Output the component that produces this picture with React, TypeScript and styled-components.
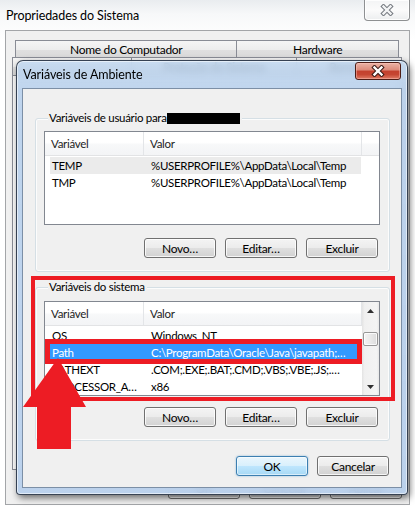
import React from "react";
import styled, { createGlobalStyle, css } from "styled-components";

const GlobalStyle = createGlobalStyle`
  html, body { margin: 0; padding: 0; }
  body {
    background: #ffffff;
    font-family: Lato, "Open Sans", "Noto Sans", sans-serif;
    font-size: 11.5px;
    letter-spacing: -0.3px;
    color: #000;
  }
  * { box-sizing: border-box; }
`;

const Desktop = styled.div`
  position: relative;
  width: 415px;
  height: 514px;
  overflow: hidden;
  background: #fff;
`;

/* ---------- outer window ---------- */
const OuterWindow = styled.div`
  display: flex;
  flex-direction: column;
  width: 415px;
  height: 514px;
  padding: 0 5px 9px;
  background: linear-gradient(180deg, #e9ecef 0px, #f7f8f9 14px, #ffffff 40px, #ffffff 100%);
`;

const OuterTitleBar = styled.div`
  height: 30px;
  display: flex;
  justify-content: space-between;
  align-items: flex-start;
`;

const WindowTitle = styled.span<{ $top: number; $left: number }>`
  margin: ${(p) => p.$top}px 0 0 ${(p) => p.$left}px;
  line-height: 16px;
  font-size: 12.5px;
  letter-spacing: -0.1px;
  color: #000;
  white-space: nowrap;
`;

const CloseButton = styled.div<{ $red?: boolean }>`
  width: 46px;
  display: flex;
  align-items: center;
  justify-content: center;
  ${(p) =>
    p.$red
      ? css`
          height: 18px;
          margin: 1px 1px 0 0;
          border: 1px solid #4d1d16;
          border-radius: 3px;
          background: linear-gradient(180deg, #eab3a6 0%, #dd8c7c 42%, #c4412e 52%, #c64632 72%, #df7c66 100%);
          box-shadow: inset 0 0 0 1px rgba(255, 200, 190, 0.45);
        `
      : css`
          height: 21px;
          border: 1px solid #8e9092;
          border-top: none;
          border-radius: 0 0 4px 4px;
          background: linear-gradient(180deg, #f3f4f5 0%, #fbfbfb 50%, #eceeef 100%);
          box-shadow: inset 0 0 0 1px rgba(255, 255, 255, 0.9);
        `}
`;

const OuterPanel = styled.div`
  flex: 1;
  display: flex;
  flex-direction: column;
  border: 1px solid #a3a5a8;
  background: #f0f0f0;
  padding: 9px 6px 5px;
`;

const TabRow = styled.div<{ $back?: boolean }>`
  display: flex;
  height: 18px;
  ${(p) =>
    p.$back
      ? css`
          margin: 0 4px 0 3px;
        `
      : css`
          margin-top: -1px;
        `}
`;

const Tab = styled.div<{ $width: number }>`
  width: ${(p) => p.$width}px;
  height: 18px;
  margin-left: -1px;
  display: flex;
  align-items: center;
  justify-content: center;
  border: 1px solid #898c95;
  border-bottom: none;
  background: linear-gradient(180deg, #f5f5f5 0%, #ededed 50%, #e0e0e0 51%, #d9d9d9 100%);
  font-size: 12px;
  white-space: nowrap;
  &:first-child {
    margin-left: 0;
  }
`;

const TabPage = styled.div`
  flex: 1;
  border: 1px solid #898c95;
  background: #fbfbfb;
`;

const ButtonRow = styled.div<{ $top: number; $right: number }>`
  display: flex;
  justify-content: flex-end;
  gap: 9px;
  margin-top: ${(p) => p.$top}px;
  margin-right: ${(p) => p.$right}px;
  flex-shrink: 0;
`;

const Button = styled.div<{ $primary?: boolean; $tall?: boolean }>`
  width: 72px;
  height: ${(p) => (p.$tall ? 21 : 20)}px;
  display: flex;
  align-items: center;
  justify-content: center;
  font-size: 12px;
  color: #000;
  border: 1px solid #707070;
  border-radius: 3px;
  background: linear-gradient(180deg, #f4f4f4 0%, #ececec 48%, #dfdfdf 52%, #d2d2d2 100%);
  box-shadow: inset 0 0 0 1px rgba(255, 255, 255, 0.8);
  ${(p) =>
    p.$primary &&
    css`
      border-color: #3c7fb1;
      background: linear-gradient(180deg, #eaf6fd 0%, #d9f0fc 48%, #bee6fd 52%, #a7d9f5 100%);
      box-shadow: inset 0 0 0 1px rgba(255, 255, 255, 0.55), 0 0 2px rgba(60, 140, 200, 0.6);
    `}
`;

/* ---------- dialog ---------- */
const Dialog = styled.div`
  position: absolute;
  left: 16px;
  top: 60px;
  width: 392px;
  height: 435px;
  display: flex;
  flex-direction: column;
  padding: 0 5px 6px;
  border: 1px solid rgba(30, 40, 55, 0.85);
  border-radius: 7px 7px 4px 4px;
  background: linear-gradient(180deg, rgba(192, 215, 240, 0.84) 0%, rgba(180, 205, 234, 0.86) 30px, rgba(183, 207, 236, 0.92) 100%);
  backdrop-filter: blur(3.5px);
  box-shadow: inset 0 0 0 1px rgba(255, 255, 255, 0.55), 2px 3px 7px rgba(0, 0, 0, 0.55);
`;

const DialogTitleBar = styled.div`
  height: 27px;
  display: flex;
  justify-content: space-between;
  align-items: flex-start;
  flex-shrink: 0;
`;

const DialogBody = styled.div`
  height: 400px;
  display: flex;
  flex-direction: column;
  border: 1px solid #7c8fa6;
  background: #f0f0f0;
  padding: 29px 11px 11px 12px;
`;

const GroupBox = styled.div<{ $gap?: number }>`
  height: 154px;
  display: flex;
  flex-direction: column;
  margin-top: ${(p) => p.$gap ?? 0}px;
  border: 1px solid #d5dfe5;
  border-radius: 3px;
  box-shadow: inset 0 0 0 1px rgba(255, 255, 255, 0.8);
  padding: 0 9px 13px 8px;
  flex-shrink: 0;
`;

const GroupTitle = styled.div`
  align-self: flex-start;
  display: flex;
  align-items: center;
  height: 16px;
  margin: -9px 0 0 4px;
  padding: 0 2px 0 1px;
  background: #f0f0f0;
  font-size: 11.5px;
  line-height: 16px;
  white-space: nowrap;
`;

const Redacted = styled.span`
  display: inline-block;
  width: 73px;
  height: 11px;
  background: #000;
  margin-top: 1px;
`;

const ListBox = styled.div<{ $top: number; $height: number }>`
  margin-top: ${(p) => p.$top}px;
  height: ${(p) => p.$height}px;
  display: flex;
  border: 1px solid #828790;
  background: #fff;
  overflow: hidden;
  flex-shrink: 0;
`;

const ListMain = styled.div`
  flex: 1;
  display: flex;
  flex-direction: column;
  min-width: 0;
`;

const Header = styled.div`
  height: 24px;
  display: flex;
  flex-shrink: 0;
  border-bottom: 1px solid #e2e3e5;
  background: linear-gradient(180deg, #ffffff 0%, #ffffff 45%, #f7f8f9 55%, #f3f4f6 100%);
`;

const HeaderCell = styled.div<{ $width?: number }>`
  ${(p) => (p.$width ? `width: ${p.$width}px;` : "flex: 1;")}
  display: flex;
  align-items: center;
  padding-left: 6px;
  border-right: 1px solid #e3e5e8;
  font-size: 11.5px;
  color: #1e1e1e;
`;

const Rows = styled.div`
  padding-top: 1px;
  display: flex;
  flex-direction: column;
`;

const Row = styled.div<{ $state?: "selected" | "inactive" }>`
  height: 17px;
  margin: 0 1px 0 5px;
  display: grid;
  grid-template-columns: 95px 1fr;
  align-items: center;
  font-size: 11.5px;
  white-space: nowrap;
  ${(p) =>
    p.$state === "selected" &&
    css`
      background: #3399ff;
      color: #fff;
    `}
  ${(p) =>
    p.$state === "inactive" &&
    css`
      background: #ebebeb;
    `}
`;

const Cell = styled.span<{ $pad: number }>`
  padding-left: ${(p) => p.$pad}px;
  overflow: hidden;
`;

const HeaderFiller = styled.div`
  width: 17px;
  display: flex;
  flex-direction: column;
`;

const FillerHead = styled.div`
  height: 24px;
  border-bottom: 1px solid #e2e3e5;
  background: linear-gradient(180deg, #ffffff 0%, #ffffff 45%, #f7f8f9 55%, #f3f4f6 100%);
`;

const ScrollBar = styled.div`
  width: 17px;
  display: flex;
  flex-direction: column;
  background: linear-gradient(90deg, #e3e3e3 0%, #f0f0f0 15%, #f4f4f4 85%, #e8e8e8 100%);
`;

const ScrollArrow = styled.div`
  height: 17px;
  display: flex;
  align-items: center;
  justify-content: center;
  flex-shrink: 0;
`;

const ScrollThumb = styled.div`
  height: 14px;
  margin: 13px 1px 0;
  border: 1px solid #979797;
  border-radius: 2px;
  background: linear-gradient(90deg, #f4f4f4 0%, #e9e9e9 50%, #dcdcdc 100%);
  box-shadow: inset 0 0 0 1px rgba(255, 255, 255, 0.8);
`;

const ScrollSpace = styled.div`
  flex: 1;
`;

const DialogButtons = styled.div`
  display: flex;
  justify-content: flex-end;
  gap: 9px;
  margin: 15px 1px 0 0;
`;

/* ---------- annotations ---------- */
const Callout = styled.div<{ $x: number; $y: number; $w: number; $h: number; $line: number }>`
  position: absolute;
  left: ${(p) => p.$x}px;
  top: ${(p) => p.$y}px;
  width: ${(p) => p.$w}px;
  height: ${(p) => p.$h}px;
  border: ${(p) => p.$line}px solid #ed1c24;
  pointer-events: none;
`;

const ArrowMark = styled.svg`
  position: absolute;
  left: 20px;
  top: 355px;
`;

const XGlyph = ({ red }: { red?: boolean }) => (
  <svg width="14" height="12" viewBox="0 0 14 12">
    <path
      d="M3.5 2.5 L10.5 9.5 M10.5 2.5 L3.5 9.5"
      stroke={red ? "#3a1a16" : "#767a80"}
      strokeWidth="4.4"
      strokeLinecap="square"
      fill="none"
    />
    <path
      d="M3.5 2.5 L10.5 9.5 M10.5 2.5 L3.5 9.5"
      stroke={red ? "#ffffff" : "#f4f5f6"}
      strokeWidth="2.4"
      strokeLinecap="square"
      fill="none"
    />
  </svg>
);

const Tri = ({ up }: { up?: boolean }) => (
  <svg width="7" height="4" viewBox="0 0 7 4">
    <path d={up ? "M0 4 L3.5 0 L7 4 Z" : "M0 0 L7 0 L3.5 4 Z"} fill="#303030" />
  </svg>
);

type Variable = { name: string; value: string; state?: "selected" | "inactive" };

const userVars: Variable[] = [
  { name: "TEMP", value: "%USERPROFILE%\\AppData\\Local\\Temp", state: "inactive" },
  { name: "TMP", value: "%USERPROFILE%\\AppData\\Local\\Temp" },
];

const systemVars: Variable[] = [
  { name: "OS", value: "Windows_NT" },
  { name: "Path", value: "C:\\ProgramData\\Oracle\\Java\\javapath;…", state: "selected" },
  { name: "PATHEXT", value: ".COM;.EXE;.BAT;.CMD;.VBS;.VBE;.JS;.…" },
  { name: "PROCESSOR_A…", value: "x86" },
];

const VarRows = ({ items }: { items: Variable[] }) => (
  <Rows>
    {items.map((v) => (
      <Row key={v.name} $state={v.state}>
        <Cell $pad={2}>{v.name}</Cell>
        <Cell $pad={6}>{v.value}</Cell>
      </Row>
    ))}
  </Rows>
);

const ListHeader = () => (
  <Header>
    <HeaderCell $width={99}>Variável</HeaderCell>
    <HeaderCell>Valor</HeaderCell>
  </Header>
);

const ActionButtons = ({ top }: { top: number }) => (
  <ButtonRow $top={top} $right={2}>
    <Button>Novo…</Button>
    <Button>Editar…</Button>
    <Button>Excluir</Button>
  </ButtonRow>
);

export default function App() {
  return (
    <Desktop>
      <GlobalStyle />
      <OuterWindow>
        <OuterTitleBar>
          <WindowTitle $top={8} $left={1}>Propriedades do Sistema</WindowTitle>
          <CloseButton>
            <XGlyph />
          </CloseButton>
        </OuterTitleBar>
        <OuterPanel>
          <TabRow $back>
            <Tab $width={223}>Nome do Computador</Tab>
            <Tab $width={163}>Hardware</Tab>
          </TabRow>
          <TabRow>
            <Tab $width={120} />
            <Tab $width={166}>Proteção do Sistema</Tab>
            <Tab $width={106}>Remoto</Tab>
          </TabRow>
          <TabPage />
          <ButtonRow $top={8} $right={1}>
            <Button $tall>OK</Button>
            <Button $tall>Cancelar</Button>
            <Button $tall>Aplicar</Button>
          </ButtonRow>
        </OuterPanel>
      </OuterWindow>

      <Dialog>
        <DialogTitleBar>
          <WindowTitle $top={6} $left={1}>Variáveis de Ambiente</WindowTitle>
          <CloseButton $red>
            <XGlyph red />
          </CloseButton>
        </DialogTitleBar>
        <DialogBody>
          <GroupBox>
            <GroupTitle>
              Variáveis de usuário para
              <Redacted />
            </GroupTitle>
            <ListBox $top={5} $height={94}>
              <ListMain>
                <ListHeader />
                <VarRows items={userVars} />
              </ListMain>
              <HeaderFiller>
                <FillerHead />
              </HeaderFiller>
            </ListBox>
            <ActionButtons top={13} />
          </GroupBox>

          <GroupBox $gap={15}>
            <GroupTitle>Variáveis do sistema</GroupTitle>
            <ListBox $top={6} $height={95}>
              <ListMain>
                <ListHeader />
                <VarRows items={systemVars} />
              </ListMain>
              <ScrollBar>
                <ScrollArrow>
                  <Tri up />
                </ScrollArrow>
                <ScrollThumb />
                <ScrollSpace />
                <ScrollArrow>
                  <Tri />
                </ScrollArrow>
              </ScrollBar>
            </ListBox>
            <ActionButtons top={11} />
          </GroupBox>

          <DialogButtons>
            <Button $primary>OK</Button>
            <Button>Cancelar</Button>
          </DialogButtons>
        </DialogBody>
      </Dialog>

      <Callout $x={31} $y={276} $w={364} $h={125} $line={4} />
      <Callout $x={45} $y={339} $w={317} $h={25} $line={5} />
      <ArrowMark width="70" height="100" viewBox="0 0 70 100">
        <polygon points="38,3 66,52 51,52 51,94 17,94 17,52 3,52" fill="#ed1c24" />
      </ArrowMark>
    </Desktop>
  );
}
